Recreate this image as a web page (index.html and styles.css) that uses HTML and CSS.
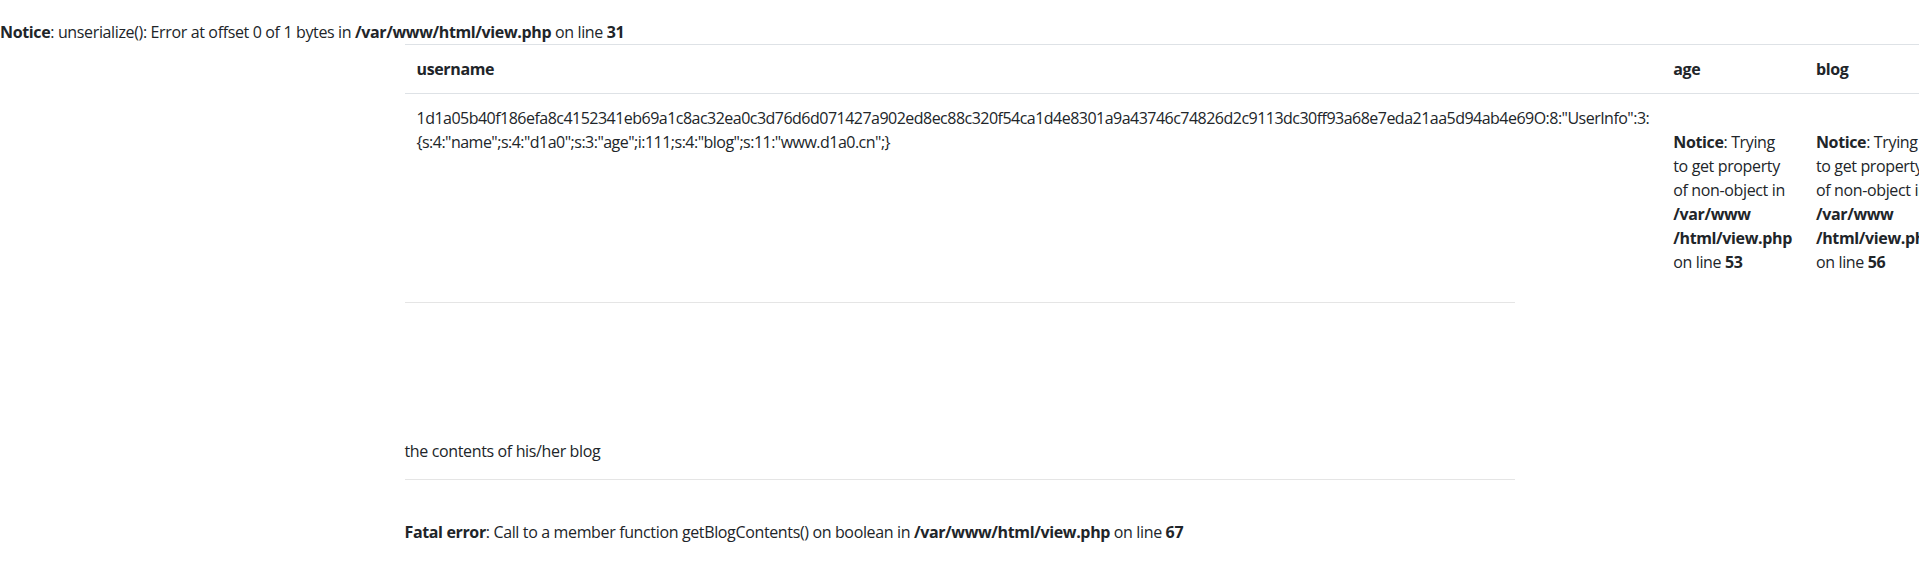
FILE: index.html
```html
<!DOCTYPE html>
<html lang="en">
<head>
<meta charset="utf-8">
<title>view</title>
<link rel="stylesheet" href="styles.css">
</head>
<body>
<div class="php-msg top-notice"><b>Notice</b>: unserialize(): Error at offset 0 of 1 bytes in <b>/var/www/html/view.php</b> on line <b>31</b></div>
<div class="container">
  <table class="table">
    <tr>
      <th>username</th>
      <th>age</th>
      <th>blog</th>
    </tr>
    <tr>
      <td class="cell-user">1d1a05b40f186efa8c4152341eb69a1c8ac32ea0c3d76d6d071427a902ed8ec88c320f54ca1d4e8301a9a43746c74826d2c9113dc30ff93a68e7eda21aa5d94ab4e69O:8:"UserInfo":3:{s:4:"name";s:4:"d1a0";s:3:"age";i:111;s:4:"blog";s:11:"www.d1a0.cn";}</td>
      <td class="cell-notice"><span class="php-msg inline-msg"><b>Notice</b>: Trying to get property of non-object in <b>/var/www<wbr>/html/view.php</b> on line <b>53</b></span></td>
      <td class="cell-notice"><span class="php-msg inline-msg"><b>Notice</b>: Trying to get property of non-object in <b>/var/www<wbr>/html/view.php</b> on line <b>56</b></span></td>
    </tr>
  </table>
  <hr class="rule">
  <p class="blog-contents">the contents of his/her blog</p>
  <hr class="rule">
  <div class="php-msg fatal"><b>Fatal error</b>: Call to a member function getBlogContents() on boolean in <b>/var/www/html/view.php</b> on line <b>67</b></div>
</div>
</body>
</html>
```

FILE: styles.css
```css
html, body {
  margin: 0;
  padding: 0;
  background: #ffffff;
}

body {
  font-family: "Open Sans", "Noto Sans", "Liberation Sans", sans-serif;
  font-size: 16px;
  line-height: 24px;
  letter-spacing: -0.36px;
  color: #212529;
}

b {
  font-weight: 700;
}

.top-notice {
  padding-top: 20px;
  height: 24px;
  white-space: nowrap;
}

.container {
  width: 1110px;
  padding: 0 15px;
  margin: 0 auto;
}

.table {
  border-collapse: collapse;
  margin: 0 0 16px 0;
  color: #212529;
}

.table th,
.table td {
  padding: 12px;
  border-top: 1px solid #dee2e6;
  vertical-align: top;
  text-align: left;
}

.table th {
  font-weight: 700;
}

.cell-user {
  letter-spacing: -0.52px;
}

.cell-notice .inline-msg {
  display: block;
  padding-top: 24px;
}

.rule {
  margin: 16px 0;
  border: 0;
  border-top: 1px solid rgba(0, 0, 0, 0.1);
  height: 0;
}

.blog-contents {
  margin: 136px 0 16px 0;
}

.fatal {
  padding-top: 24px;
}
```
